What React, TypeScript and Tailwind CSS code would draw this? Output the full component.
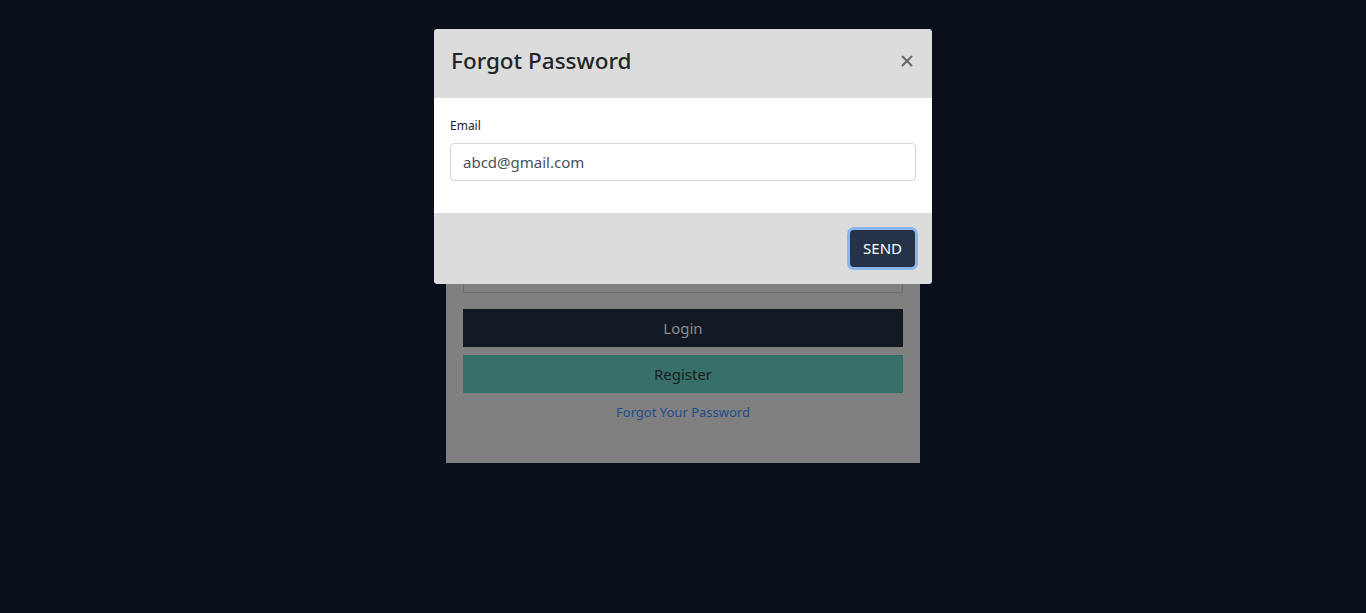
import { X } from 'lucide-react'

const font = { fontFamily: '"Noto Sans", "Open Sans", sans-serif' }

export default function App() {
  return (
    <div className="relative h-[613px] w-full overflow-hidden bg-[#0a101b]" style={font}>
      {/* Login card behind the backdrop */}
      <div className="ml-[446px] mt-[120px] w-[474px] bg-[#808080] px-[17px] pt-[20px] pb-[40px]">
        <div className="mb-[15px] h-[38px] border border-[#6f6f6f]" />
        <div className="mb-[24px] h-[38px] border border-[#6f6f6f]" />
        <div className="mb-[16px] h-[38px] border border-[#6f6f6f]" />
        <div className="mb-[8px] flex h-[38px] items-center justify-center bg-[#121924] text-[15px] text-[#8a8a8a]">
          Login
        </div>
        <div className="mb-[10px] flex h-[38px] items-center justify-center bg-[#37706a] text-[15px] text-[#1a1d1e]">
          Register
        </div>
        <div className="text-center text-[13px] text-[#1f4d8c]">Forgot Your Password</div>
      </div>

      {/* Modal */}
      <div className="absolute left-[434px] top-[29px] w-[498px] overflow-hidden rounded-[4px] bg-white">
        <div className="flex h-[69px] items-center justify-between bg-[#dcdcdc] pb-[6px] pl-[17px] pr-[16px]">
          <h2 className="text-[22.5px] font-medium text-[#212529]">Forgot Password</h2>
          <X className="h-[18px] w-[18px] text-[#6a6a6a]" strokeWidth={2.75} />
        </div>
        <div className="px-[16px] pt-[19px] pb-[32px]">
          <label className="mb-[8px] block text-[12px] text-[#212529]">Email</label>
          <div className="flex h-[38px] items-center rounded-[4px] border border-[#ced4da] px-[12px] text-[15px] text-[#495057]">
            abcd@gmail.com
          </div>
        </div>
        <div className="flex h-[71px] items-center justify-end bg-[#dcdcdc] pr-[17px]">
          <button
            type="button"
            className="flex h-[37px] items-center rounded-[4px] bg-[#253248] px-[13px] text-[15px] text-white ring-[3px] ring-[#86b7ee]"
          >
            SEND
          </button>
        </div>
      </div>
    </div>
  )
}
